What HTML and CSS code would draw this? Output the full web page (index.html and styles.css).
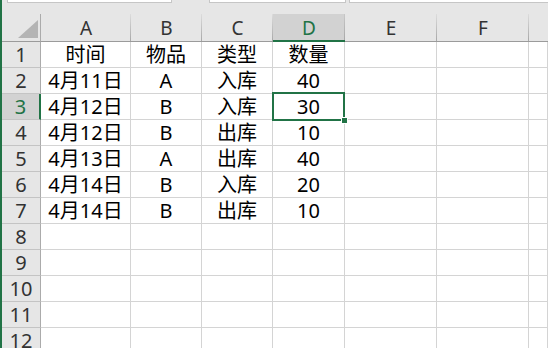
FILE: index.html
```html
<!DOCTYPE html>
<html lang="zh-CN">
<head>
    <meta charset="UTF-8">
    <title>工作表</title>
    <link rel="stylesheet" href="styles.css">
</head>
<body>
    <div class="app">
        <!-- Tepi hijau jendela -->
        <div class="edge"></div>

        <div class="main">
            <!-- Bilah nama / rumus -->
            <div class="toolbar">
                <div class="box box-name"></div>
                <div class="box box-fx"></div>
                <div class="box box-formula"></div>
            </div>

            <!-- Lembar kerja -->
            <div class="sheet">
                <div class="corner">
                    <svg width="20" height="18" viewBox="0 0 20 18"><polygon points="20,0 20,18 0,18" fill="#b4b4b4"/></svg>
                </div>
                <div class="col-head">A</div>
                <div class="col-head">B</div>
                <div class="col-head">C</div>
                <div class="col-head active">D</div>
                <div class="col-head">E</div>
                <div class="col-head">F</div>
                <div class="col-head last"></div>

                <div class="row-head">1</div>
                <div class="cell">时间</div><div class="cell">物品</div><div class="cell">类型</div><div class="cell">数量</div><div class="cell"></div><div class="cell"></div><div class="cell"></div>

                <div class="row-head">2</div>
                <div class="cell">4月11日</div><div class="cell">A</div><div class="cell">入库</div><div class="cell">40</div><div class="cell"></div><div class="cell"></div><div class="cell"></div>

                <div class="row-head active">3</div>
                <div class="cell">4月12日</div><div class="cell">B</div><div class="cell">入库</div><div class="cell">30</div><div class="cell"></div><div class="cell"></div><div class="cell"></div>

                <div class="row-head">4</div>
                <div class="cell">4月12日</div><div class="cell">B</div><div class="cell">出库</div><div class="cell">10</div><div class="cell"></div><div class="cell"></div><div class="cell"></div>

                <div class="row-head">5</div>
                <div class="cell">4月13日</div><div class="cell">A</div><div class="cell">出库</div><div class="cell">40</div><div class="cell"></div><div class="cell"></div><div class="cell"></div>

                <div class="row-head">6</div>
                <div class="cell">4月14日</div><div class="cell">B</div><div class="cell">入库</div><div class="cell">20</div><div class="cell"></div><div class="cell"></div><div class="cell"></div>

                <div class="row-head">7</div>
                <div class="cell">4月14日</div><div class="cell">B</div><div class="cell">出库</div><div class="cell">10</div><div class="cell"></div><div class="cell"></div><div class="cell"></div>

                <div class="row-head">8</div>
                <div class="cell"></div><div class="cell"></div><div class="cell"></div><div class="cell"></div><div class="cell"></div><div class="cell"></div><div class="cell"></div>

                <div class="row-head">9</div>
                <div class="cell"></div><div class="cell"></div><div class="cell"></div><div class="cell"></div><div class="cell"></div><div class="cell"></div><div class="cell"></div>

                <div class="row-head">10</div>
                <div class="cell"></div><div class="cell"></div><div class="cell"></div><div class="cell"></div><div class="cell"></div><div class="cell"></div><div class="cell"></div>

                <div class="row-head">11</div>
                <div class="cell"></div><div class="cell"></div><div class="cell"></div><div class="cell"></div><div class="cell"></div><div class="cell"></div><div class="cell"></div>

                <div class="row-head">12</div>
                <div class="cell"></div><div class="cell"></div><div class="cell"></div><div class="cell"></div><div class="cell"></div><div class="cell"></div><div class="cell"></div>
            </div>
        </div>

        <!-- Sel aktif D3 -->
        <div class="selection"><span class="handle"></span></div>
    </div>
</body>
</html>
```

FILE: styles.css
```css
body {
    margin: 0;
    height: 100vh;
    overflow: hidden;
    background: #ffffff;
    font-family: 'Noto Sans', 'Noto Sans CJK SC', sans-serif;
    color: #000;
}

.app {
    display: flex;
    height: 100%;
    position: relative;
}

.edge {
    width: 2px;
    background: #217346;
    flex-shrink: 0;
}

.main {
    flex: 1;
    display: flex;
    flex-direction: column;
    background: #e6e6e6;
    min-width: 0;
}

/* Bilah atas */
.toolbar {
    height: 14px;
    display: flex;
    align-items: flex-start;
    flex-shrink: 0;
}
.box {
    height: 2px;
    background: #fff;
    border: 1px solid #c6c6c6;
    border-top: none;
}
.box-name {
    margin-left: 5px;
    width: 163px;
}
.box-fx {
    margin-left: 37px;
    width: 135px;
}
.box-formula {
    margin-left: 3px;
    flex: 1;
    border-right: none;
}

/* Grid lembar kerja */
.sheet {
    flex: 1;
    display: grid;
    grid-template-columns: 39px 90px 71px 71px 72px 92px 92px 1fr;
    grid-template-rows: 28px;
    grid-auto-rows: 26px;
    background: #fff;
}
.sheet > div {
    box-sizing: border-box;
    display: flex;
    align-items: flex-end;
    justify-content: center;
    font-size: 20px;
    line-height: 24px;
    padding-bottom: 0;
    white-space: nowrap;
}

.corner {
    background: #e6e6e6;
    border-right: 1px solid #ababab;
    border-bottom: 1px solid #9b9b9b;
    justify-content: flex-end !important;
    padding: 0 2px 3px 0 !important;
}
.corner svg {
    display: block;
}

.col-head {
    background: linear-gradient(to bottom, #dcdcdc, #a8a8a8) right / 1px 100% no-repeat, #e6e6e6;
    border-bottom: 1px solid #9b9b9b;
    color: #333;
    font-size: 19px !important;
    padding-bottom: 1px !important;
}
.col-head.active {
    background: linear-gradient(to bottom, #c8c8c8, #a8a8a8) right / 1px 100% no-repeat, #d2d2d2;
    border-bottom: 2px solid #217346;
    color: #217346;
    padding-bottom: 0 !important;
}
.col-head.last {
    background: #e6e6e6;
}

.row-head {
    background: #e6e6e6;
    border-right: 1px solid #ababab;
    border-bottom: 1px solid #c4c4c4;
    color: #333;
}
.row-head.active {
    background: #d2d2d2;
    color: #217346;
    border-right: 2px solid #217346;
}

.cell {
    border-right: 1px solid #d4d4d4;
    border-bottom: 1px solid #d4d4d4;
}

/* Kotak sel terpilih */
.selection {
    position: absolute;
    left: 272px;
    top: 92px;
    width: 73px;
    height: 29px;
    box-sizing: border-box;
    border: 2px solid #217346;
}
.handle {
    position: absolute;
    right: -5px;
    bottom: -5px;
    width: 5px;
    height: 5px;
    background: #217346;
    border: 1px solid #fff;
}
```
